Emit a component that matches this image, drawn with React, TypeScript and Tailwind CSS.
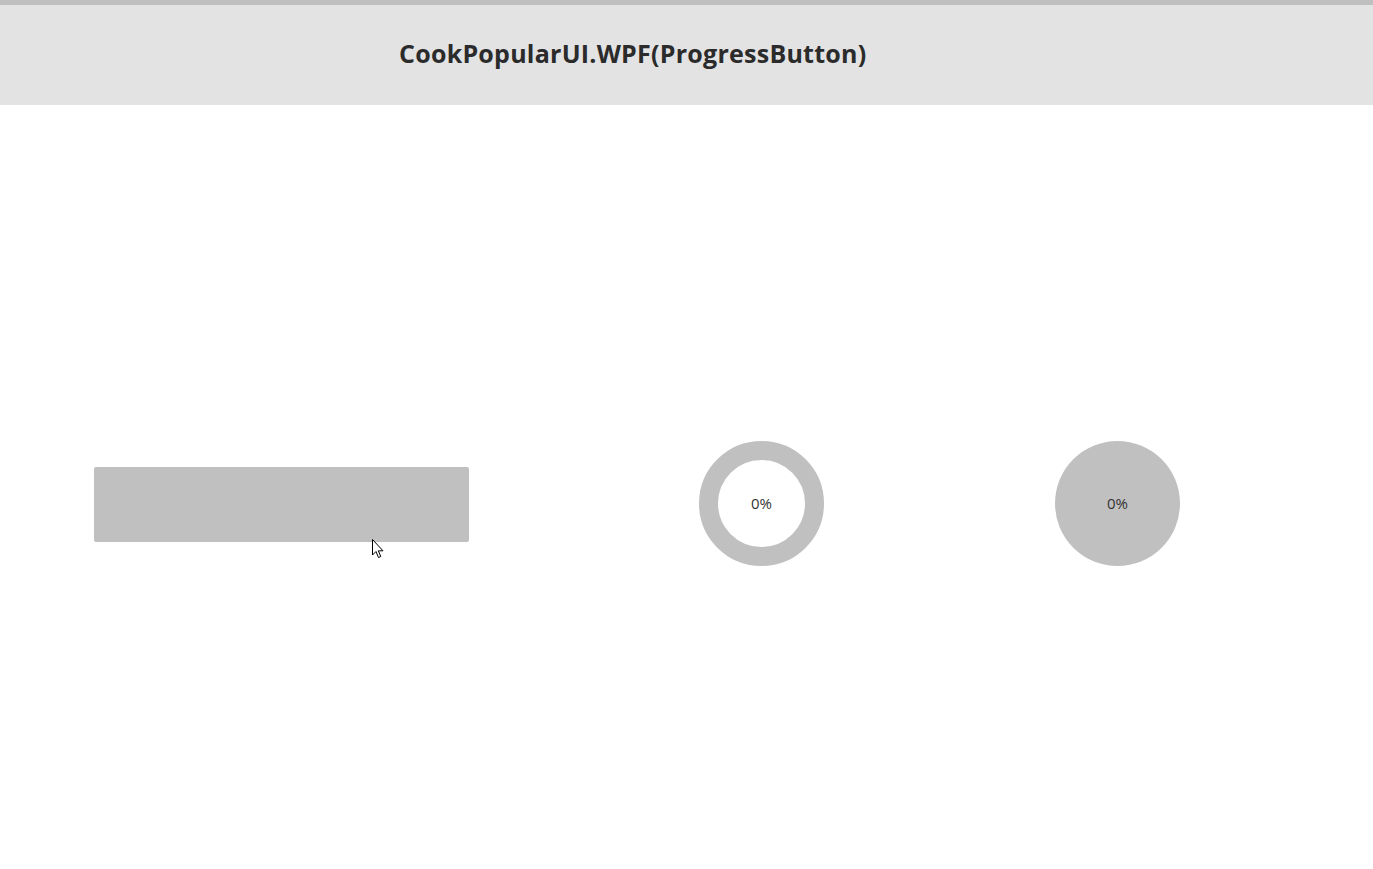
import React from 'react';

const Cursor: React.FC = () => (
  <svg width="13" height="20" viewBox="0 0 13 20" className="absolute left-[372px] top-[539px]">
    <path d="M0.5 0.5 L0.5 16 L4 12.5 L6.5 18.5 L8.8 17.5 L6.3 11.8 L11 11.8 Z" fill="#fff" stroke="#000" strokeWidth="1" strokeLinejoin="miter" />
  </svg>
);

const App: React.FC = () => {
  return (
    <div className="relative w-[1373px] h-[869px] bg-white overflow-hidden" style={{ fontFamily: '"Open Sans", "Liberation Sans", sans-serif' }}>
      <div className="h-[5px] bg-[#bfbfbf]" />
      <div className="h-[100px] bg-[#e3e3e3] flex items-center pl-[399px] pb-[2px]">
        <h1 className="text-[25px] font-bold text-[#2b2b2b] tracking-[0.25px]">CookPopularUI.WPF(ProgressButton)</h1>
      </div>
      <div className="h-[764px] pt-[34px] flex items-center pl-[94px]">
        <button className="w-[375px] h-[75px] bg-[#c0c0c0] rounded-[2px]" />
        <div className="ml-[230px] mb-[2px] w-[125px] h-[125px] rounded-full border-[19px] border-[#c0c0c0] flex items-center justify-center">
          <span className="text-[15px] text-[#333] leading-none">0%</span>
        </div>
        <div className="ml-[231px] mb-[2px] w-[125px] h-[125px] rounded-full bg-[#c0c0c0] flex items-center justify-center">
          <span className="text-[15px] text-[#333] leading-none">0%</span>
        </div>
      </div>
      <Cursor />
    </div>
  );
};

export default App;
